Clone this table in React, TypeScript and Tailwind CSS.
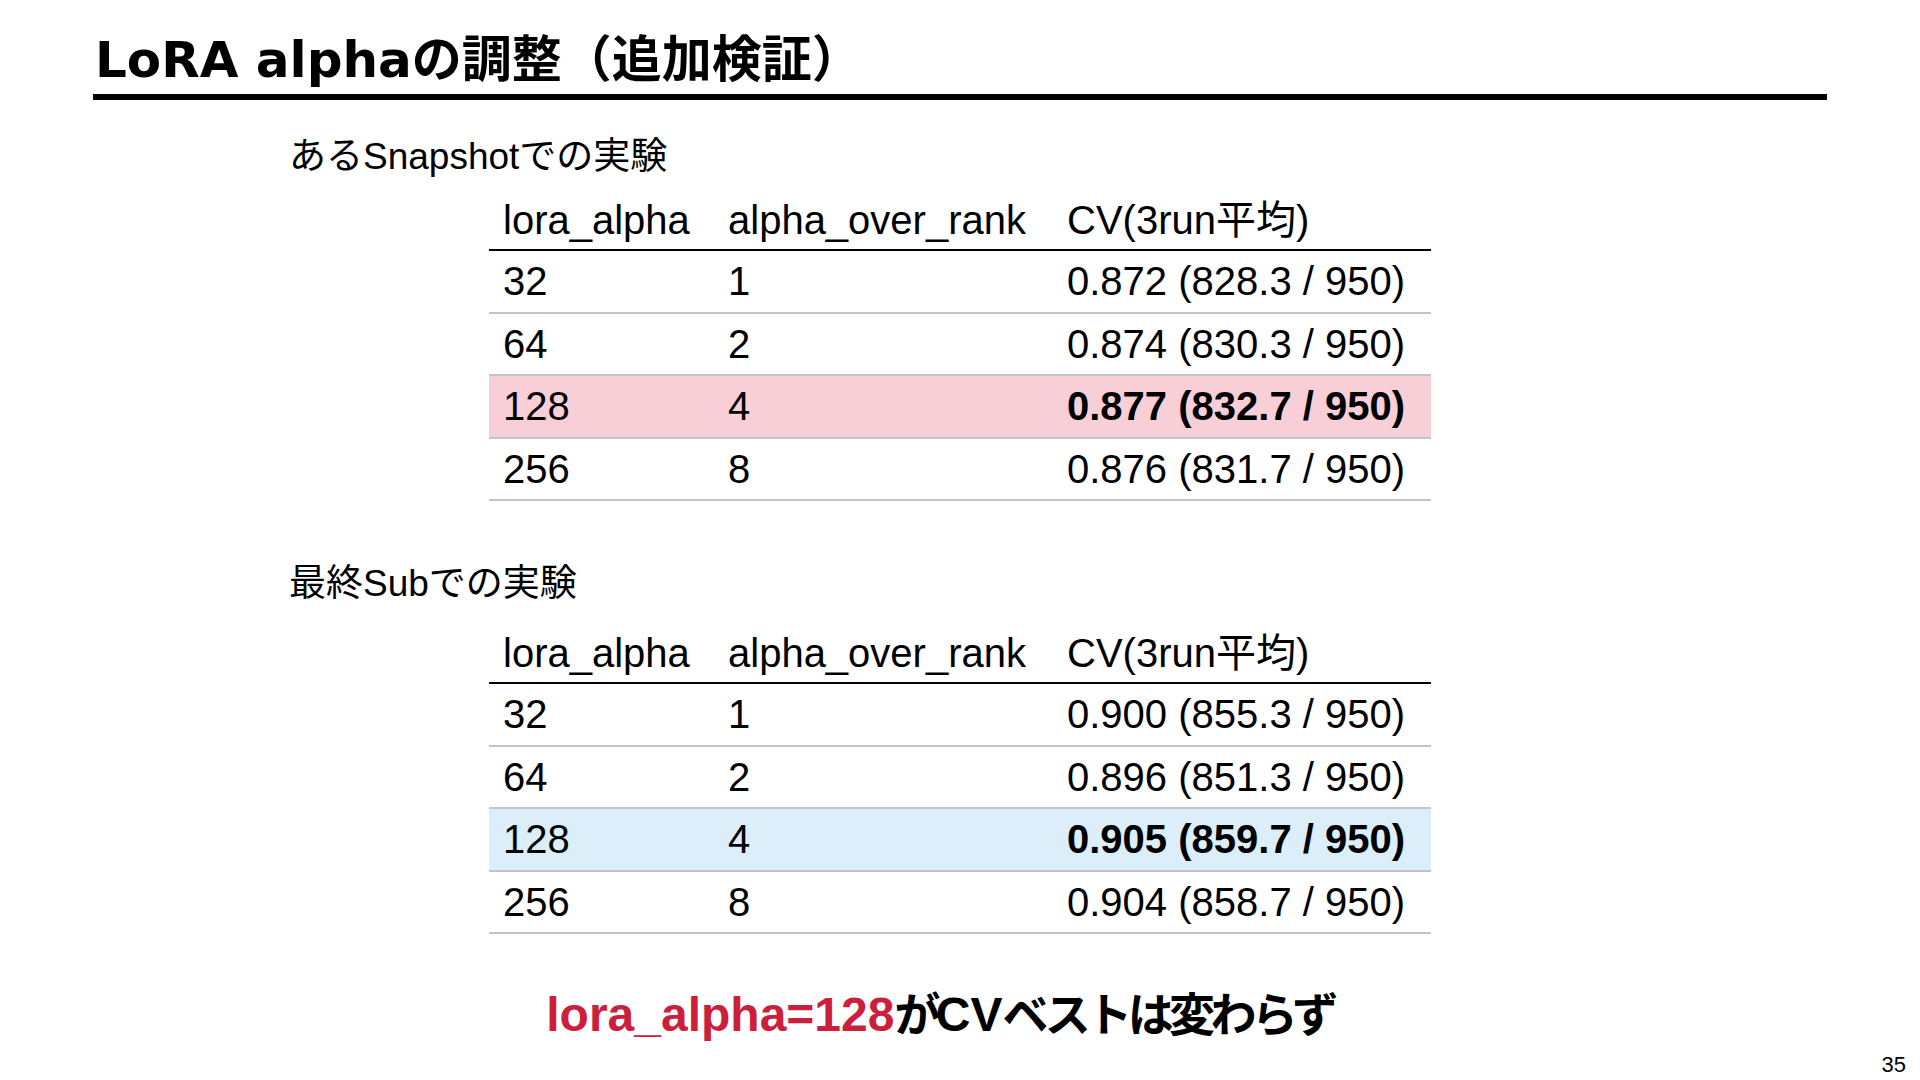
import React from "react";

type Row = { alpha: string; ratio: string; cv: string; best?: boolean };

const snapshotRows: Row[] = [
  { alpha: "32", ratio: "1", cv: "0.872 (828.3 / 950)" },
  { alpha: "64", ratio: "2", cv: "0.874 (830.3 / 950)" },
  { alpha: "128", ratio: "4", cv: "0.877 (832.7 / 950)", best: true },
  { alpha: "256", ratio: "8", cv: "0.876 (831.7 / 950)" },
];

const finalRows: Row[] = [
  { alpha: "32", ratio: "1", cv: "0.900 (855.3 / 950)" },
  { alpha: "64", ratio: "2", cv: "0.896 (851.3 / 950)" },
  { alpha: "128", ratio: "4", cv: "0.905 (859.7 / 950)", best: true },
  { alpha: "256", ratio: "8", cv: "0.904 (858.7 / 950)" },
];

const sans = "font-['Liberation_Sans','Noto_Sans_CJK_JP',sans-serif]";

function ResultTable({ rows, highlight }: { rows: Row[]; highlight: string }) {
  return (
    <div className={`ml-[489px] w-[942px] text-[40px] leading-none text-black ${sans}`}>
      <div className="flex h-[60px] items-center border-b-2 border-black">
        <div className="w-[225px] pl-[14px]">lora_alpha</div>
        <div className="w-[339px] pl-[14px]">alpha_over_rank</div>
        <div className="flex-1 pl-[14px]">CV(3run平均)</div>
      </div>
      {rows.map((row) => (
        <div
          key={row.alpha}
          className={`flex h-[62.5px] items-center border-b-2 border-[#c4c4c4] ${row.best ? highlight : ""}`}
        >
          <div className="w-[225px] pl-[14px]">{row.alpha}</div>
          <div className="w-[339px] pl-[14px]">{row.ratio}</div>
          <div className={`flex-1 pl-[14px] ${row.best ? "font-bold" : ""}`}>{row.cv}</div>
        </div>
      ))}
    </div>
  );
}

export default function App() {
  return (
    <div className="flex h-[1080px] w-[1920px] flex-col overflow-hidden bg-white text-black">
      <h1 className="ml-[95px] mt-[35px] font-['DejaVu_Sans','Noto_Sans_CJK_JP',sans-serif] text-[50px] font-bold leading-none">
        LoRA alphaの調整（追加検証）
      </h1>
      <div className="ml-[93px] mt-[9px] h-[6px] w-[1734px] bg-black" />

      <p className={`ml-[289px] mt-[38px] text-[37px] leading-none ${sans}`}>あるSnapshotでの実験</p>
      <div className="mt-[16px]">
        <ResultTable rows={snapshotRows} highlight="bg-[#f8cfd6]" />
      </div>

      <p className={`ml-[289px] mt-[64px] text-[37px] leading-none ${sans}`}>最終Subでの実験</p>
      <div className="mt-[22px]">
        <ResultTable rows={finalRows} highlight="bg-[#dbeefa]" />
      </div>

      <div className={`mt-[57px] flex items-baseline justify-center pr-[40px] text-[48px] font-bold leading-none ${sans}`}>
        <span className="text-[#cc1f3c]">lora_alpha=128</span>
        <span className="text-[46px] tracking-[-0.1em]">が</span>
        <span>CV</span>
        <span className="text-[46px] tracking-[-0.1em]">ベストは変わらず</span>
      </div>

      <div className="mt-[15px] flex justify-end pr-[14px] font-['Liberation_Sans',sans-serif] text-[22px] leading-none">
        35
      </div>
    </div>
  );
}
